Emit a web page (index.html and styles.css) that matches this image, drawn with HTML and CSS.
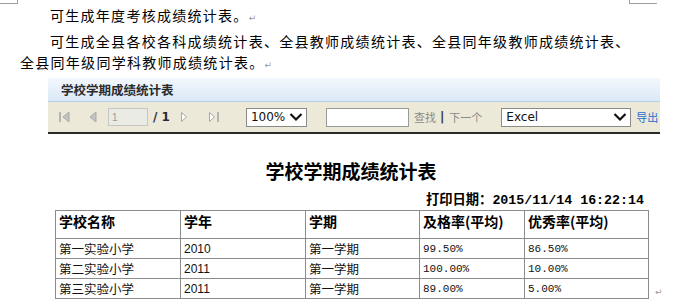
FILE: index.html
```html
<!DOCTYPE html>
<html lang="zh-CN">
<head>
  <meta charset="UTF-8" />
  <title>学校学期成绩统计表</title>
  <link rel="stylesheet" href="styles.css">
</head>
<body>
  <div class="corner corner-left"></div>
  <div class="corner corner-right"></div>

  <div class="doc">
    <p class="para">可生成年度考核成绩统计表。<span class="mark">↵</span></p>
    <p class="para">可生成全县各校各科成绩统计表、全县教师成绩统计表、全县同年级教师成绩统计表、全县同年级同学科教师成绩统计表。<span class="mark">↵</span></p>
  </div>

  <div class="shot">
    <div class="shot-title">学校学期成绩统计表</div>

    <div class="toolbar">
      <span class="tb-icon first">
        <svg width="14" height="14" viewBox="0 0 14 14"><rect x="1" y="2" width="2" height="10" fill="#b4b4b4"/><path d="M11 2 L5 7 L11 12 Z" fill="#c4c4c4" stroke="#a8a8a8"/></svg>
      </span>
      <span class="tb-icon prev">
        <svg width="8" height="14" viewBox="0 0 8 14"><path d="M7 2 L1 7 L7 12 Z" fill="#c4c4c4" stroke="#a8a8a8"/></svg>
      </span>
      <input class="page-input" type="text" value="1" disabled />
      <span class="page-total">/ 1</span>
      <span class="tb-icon next">
        <svg width="8" height="14" viewBox="0 0 8 14"><path d="M1.5 2.5 L6.5 7 L1.5 11.5 Z" fill="#fff" stroke="#a8a8a8"/></svg>
      </span>
      <span class="tb-icon last">
        <svg width="12" height="14" viewBox="0 0 12 14"><path d="M1.5 2.5 L6.5 7 L1.5 11.5 Z" fill="#fff" stroke="#a8a8a8"/><rect x="9" y="2" width="2" height="10" fill="#b4b4b4"/></svg>
      </span>
      <span class="select zoom-select">100%<span class="chev"><svg width="14" height="10" viewBox="0 0 14 10"><path d="M1.5 2 L7 7.5 L12.5 2" fill="none" stroke="#111" stroke-width="2.2"/></svg></span></span>
      <input class="search-input" type="text" />
      <span class="find">查找</span>
      <span class="sep">|</span>
      <span class="find">下一个</span>
      <span class="select export-select">Excel<span class="chev"><svg width="14" height="10" viewBox="0 0 14 10"><path d="M1.5 2 L7 7.5 L12.5 2" fill="none" stroke="#111" stroke-width="2.2"/></svg></span></span>
      <a class="export">导出</a>
    </div>

    <div class="report">
      <h1 class="report-title">学校学期成绩统计表</h1>
      <div class="print-date">打印日期：2015/11/14 16:22:14</div>
      <table class="score-table">
        <colgroup>
          <col class="c1"><col class="c2"><col class="c3"><col class="c4"><col class="c5">
        </colgroup>
        <tr class="head">
          <th>学校名称</th><th>学年</th><th>学期</th><th>及格率(平均)</th><th>优秀率(平均)</th>
        </tr>
        <tr>
          <td>第一实验小学</td><td class="year">2010</td><td>第一学期</td><td class="num">99.50%</td><td class="num">86.50%</td>
        </tr>
        <tr>
          <td>第二实验小学</td><td class="year">2011</td><td>第一学期</td><td class="num">100.00%</td><td class="num">10.00%</td>
        </tr>
        <tr>
          <td>第三实验小学</td><td class="year">2011</td><td>第一学期</td><td class="num">89.00%</td><td class="num">5.00%</td>
        </tr>
      </table>
      <span class="mark table-mark">↵</span>
    </div>
  </div>
</body>
</html>
```

FILE: styles.css
```css
body {
  margin: 0;
  padding-top: 5px;
  font-family: "Noto Sans CJK SC", sans-serif;
  background: #fff;
  color: #000;
  overflow: hidden;
}
.corner {
  position: absolute;
  top: 0;
  height: 3px;
  border-bottom: 1px solid #a0a0a0;
}
.corner-left {
  left: 0;
  width: 17px;
  border-right: 1px solid #a0a0a0;
}
.corner-right {
  left: 629px;
  width: 27px;
  border-left: 1px solid #a0a0a0;
}
.doc {
  padding-left: 20px;
  width: 618px;
}
.para {
  margin: 0 0 5px;
  font-size: 14px;
  line-height: 21px;
  letter-spacing: 1.28px;
  text-indent: 30px;
}
.mark {
  font-family: "DejaVu Sans", sans-serif;
  font-size: 9px;
  line-height: 10px;
  color: #9a9a9a;
  letter-spacing: 0;
  margin-left: 0;
}
.shot {
  margin: 1px 0 0 48px;
  width: 641px;
}
.shot-title {
  width: 612px;
  height: 24px;
  box-sizing: border-box;
  padding-left: 13px;
  line-height: 23px;
  font-size: 12.5px;
  font-weight: bold;
  color: #2b2b2b;
  background: linear-gradient(#f3f8fd, #dae8f6);
  border-bottom: 1px solid #b4cfe9;
}
.toolbar {
  width: 612px;
  height: 32px;
  box-sizing: border-box;
  display: flex;
  align-items: center;
  padding-left: 10px;
  background: #ece9d8;
  border-bottom: 2px solid #2a2a2a;
  white-space: nowrap;
  overflow: hidden;
  font-family: Tahoma, "DejaVu Sans", "Noto Sans CJK SC", sans-serif;
}
.tb-icon {
  display: flex;
}
.prev {
  margin-left: 17px;
}
.page-input {
  margin-left: 11px;
  width: 40px;
  height: 18px;
  box-sizing: border-box;
  padding: 0 3px;
  font-size: 10px;
  color: #999;
  background: #ebebe6;
  border: 1px solid #c6c6c6;
}
.page-total {
  margin-left: 5px;
  font-size: 12px;
  font-weight: bold;
  color: #2a2a3a;
}
.next {
  margin-left: 10px;
}
.last {
  margin-left: 20px;
}
.select {
  display: flex;
  align-items: center;
  justify-content: space-between;
  height: 19px;
  box-sizing: border-box;
  padding: 0 3px 0 4px;
  font-size: 12px;
  color: #111;
  background: #fff;
  border: 1px solid #8a8a8a;
  font-family: "DejaVu Sans", sans-serif;
}
.chev {
  display: flex;
}
.zoom-select {
  margin-left: 26px;
  width: 61px;
}
.search-input {
  margin-left: 19px;
  width: 83px;
  height: 19px;
  box-sizing: border-box;
  background: #fff;
  border: 1px solid #9a9a9a;
}
.find {
  font-size: 11px;
  color: #8a8a8a;
  margin-left: 5px;
}
.sep {
  margin-left: 4px;
  font-size: 12px;
  color: #333;
  font-weight: bold;
}
.export-select {
  margin-left: 19px;
  width: 130px;
}
.export {
  margin-left: 5px;
  font-size: 11px;
  color: #2a6fd0;
}
.report {
  position: relative;
  padding: 0 0 0 7px;
}
.report-title {
  margin: 24px 0 0;
  width: 592px;
  text-align: center;
  font-size: 19px;
  line-height: 26px;
  font-weight: bold;
  color: #000;
}
.print-date {
  width: 589px;
  margin-top: 9px;
  text-align: right;
  font-family: "Liberation Mono", "Noto Sans CJK SC", monospace;
  font-size: 13.3px;
  font-weight: bold;
  line-height: 16px;
}
.score-table {
  margin-top: 1px;
  border-collapse: collapse;
  table-layout: fixed;
  width: 593px;
}
.c1 { width: 125px; }
.c2 { width: 125px; }
.c3 { width: 114px; }
.c4 { width: 105px; }
.c5 { width: 124px; }
.score-table th,
.score-table td {
  border: 1px solid #8c8c8c;
  padding: 0 0 0 3px;
  text-align: left;
  white-space: nowrap;
  overflow: hidden;
}
.score-table th {
  height: 27px;
  vertical-align: top;
  font-size: 14px;
  line-height: 20px;
  font-weight: bold;
}
.score-table td {
  height: 19px;
  font-size: 12.5px;
  line-height: 18px;
  color: #111;
}
.score-table td.year {
  font-family: "Liberation Sans", sans-serif;
  font-size: 12px;
}
.score-table td.num {
  font-family: "Liberation Mono", monospace;
  font-size: 11px;
}
.table-mark {
  position: absolute;
  left: 607px;
  bottom: 2px;
}
```
